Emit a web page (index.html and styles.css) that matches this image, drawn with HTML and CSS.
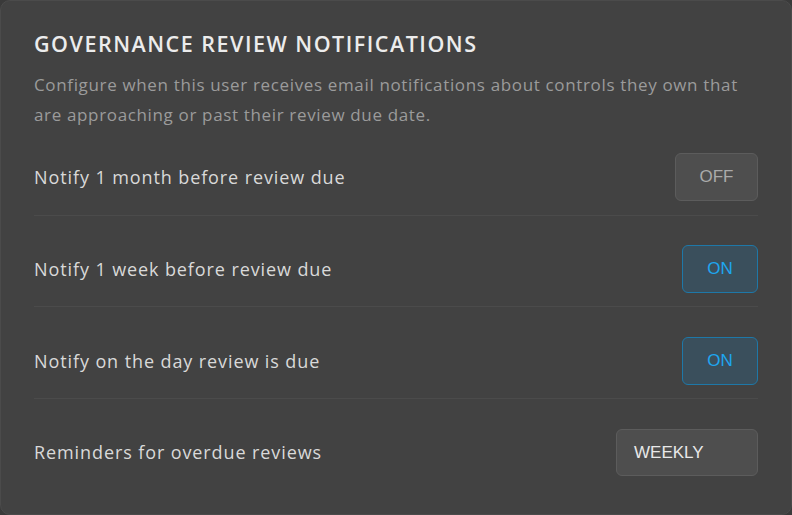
FILE: index.html
```html
<!DOCTYPE html>
<html>
<head>
<meta charset="utf-8">
<link rel="stylesheet" href="styles.css">
</head>
<body>
<div class="card">
  <h1 class="title">GOVERNANCE REVIEW NOTIFICATIONS</h1>
  <p class="desc">Configure when this user receives email notifications about controls they own that are approaching or past their review due date.</p>
  <div class="rows">
    <div class="row">
      <span class="label">Notify 1 month before review due</span>
      <button class="toggle off">OFF</button>
    </div>
    <div class="row">
      <span class="label">Notify 1 week before review due</span>
      <button class="toggle on">ON</button>
    </div>
    <div class="row">
      <span class="label">Notify on the day review is due</span>
      <button class="toggle on">ON</button>
    </div>
    <div class="row last">
      <span class="label">Reminders for overdue reviews</span>
      <div class="select">WEEKLY</div>
    </div>
  </div>
</div>
</body>
</html>
```

FILE: styles.css
```css
html, body {
  margin: 0;
  padding: 0;
  background: #3a3a3a;
}
.card {
  box-sizing: border-box;
  width: 792px;
  height: 515px;
  background: #424242;
  border: 1px solid #4b4b4b;
  border-radius: 10px;
  padding: 26px 33px 0 33px;
  font-family: "Open Sans", "Noto Sans", sans-serif;
}
.title {
  margin: 0;
  font-size: 21.5px;
  line-height: 34px;
  font-weight: 600;
  color: #ececec;
  letter-spacing: 1.5px;
}
.desc {
  margin: 9px 0 0 0;
  font-size: 17px;
  line-height: 30px;
  color: #9b9b9b;
  letter-spacing: 0.65px;
}
.rows {
  margin-top: 23px;
}
.row {
  display: flex;
  align-items: center;
  justify-content: space-between;
  padding: 0 0 13.5px 0;
  border-bottom: 1px solid #4b4b4b;
  margin-bottom: 29.4px;
}
.row.last {
  border-bottom: none;
  margin-bottom: 0;
}
.label {
  font-size: 18px;
  color: #d9d9d9;
  letter-spacing: 0.9px;
}
.toggle {
  box-sizing: border-box;
  height: 48px;
  border-radius: 6px;
  font-family: "Liberation Sans", Arial, sans-serif;
  font-size: 17px;
  padding: 0;
  margin: 0;
}
.toggle.off {
  width: 83px;
  background: #4e4e4e;
  border: 1px solid #5c5c5c;
  color: #aaaaaa;
}
.toggle.on {
  width: 76px;
  background: #3a4f5c;
  border: 1px solid #1e78a8;
  color: #1ea6f0;
}
.select {
  box-sizing: border-box;
  width: 142px;
  height: 47px;
  border-radius: 6px;
  background: #4e4e4e;
  border: 1px solid #5c5c5c;
  color: #e8e8e8;
  font-family: "Liberation Sans", Arial, sans-serif;
  font-size: 17px;
  display: flex;
  align-items: center;
  padding: 2px 0 0 17px;
}
```
